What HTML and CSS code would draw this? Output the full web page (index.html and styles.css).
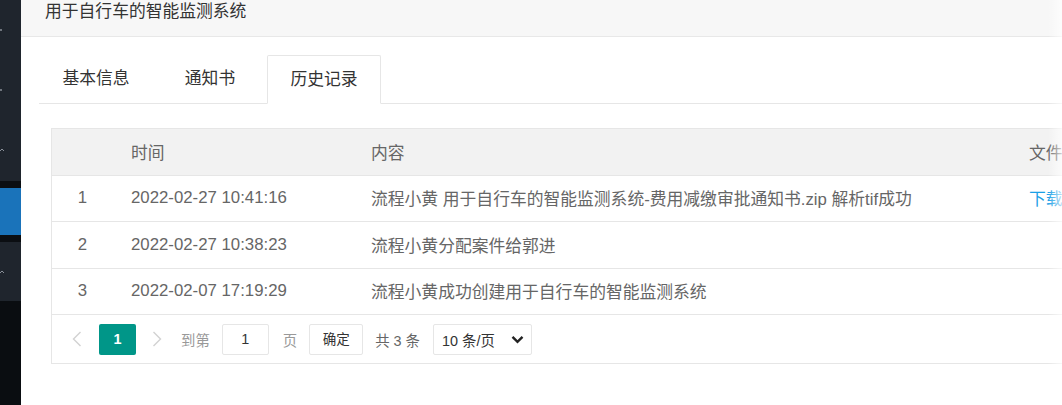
FILE: index.html
```html
<!DOCTYPE html>
<html>
	<head>
		<meta charset="UTF-8">
		<title>历史记录</title>
		<link rel="stylesheet" href="styles.css">
	</head>
	<body>
		<div id="side">
			<div class="seg dark top">
				<i class="mk" style="top:29px"></i>
				<i class="mk" style="top:89px"></i>
				<svg class="up" style="top:148px" width="5" height="5" viewBox="0 0 5 5"><path d="M-1 4 L2 1 L4 3" fill="none" stroke="#8a9099" stroke-width="1"/></svg>
			</div>
			<div class="seg gap"></div>
			<div class="seg blue"></div>
			<div class="seg gap"></div>
			<div class="seg dark mid">
				<svg class="up" style="top:28px" width="5" height="5" viewBox="0 0 5 5"><path d="M-1 4 L2 1 L4 3" fill="none" stroke="#8a9099" stroke-width="1"/></svg>
			</div>
			<div class="seg black"></div>
		</div>
		<div id="main">
			<div class="head">用于自行车的智能监测系统</div>
			<div class="tab">
				<ul class="tab-title">
					<li>基本信息</li>
					<li>通知书</li>
					<li class="this">历史记录</li>
				</ul>
				<div class="tab-content">
					<div class="grid">
						<table>
							<thead>
								<tr>
									<th class="c-no"></th>
									<th class="c-time">时间</th>
									<th class="c-text">内容</th>
									<th class="c-file">文件</th>
								</tr>
							</thead>
							<tbody>
								<tr>
									<td class="c-no">1</td>
									<td>2022-02-27 10:41:16</td>
									<td>流程小黄 用于自行车的智能监测系统-费用减缴审批通知书.zip 解析tif成功</td>
									<td><a class="link">下载</a></td>
								</tr>
								<tr>
									<td class="c-no">2</td>
									<td>2022-02-27 10:38:23</td>
									<td>流程小黄分配案件给郭进</td>
									<td></td>
								</tr>
								<tr>
									<td class="c-no">3</td>
									<td>2022-02-07 17:19:29</td>
									<td>流程小黄成功创建用于自行车的智能监测系统</td>
									<td></td>
								</tr>
							</tbody>
						</table>
						<div class="pager">
							<span class="arrow"><svg width="10" height="16" viewBox="0 0 10 16"><path d="M8.5 1 L1.5 8 L8.5 15" fill="none" stroke="#d2d2d2" stroke-width="1.4"/></svg></span>
							<span class="curr">1</span>
							<span class="arrow next"><svg width="10" height="16" viewBox="0 0 10 16"><path d="M1.5 1 L8.5 8 L1.5 15" fill="none" stroke="#d2d2d2" stroke-width="1.4"/></svg></span>
							<span class="lbl">到第</span>
							<span class="inp">1</span>
							<span class="lbl pg">页</span>
							<span class="btn">确定</span>
							<span class="count">共 3 条</span>
							<span class="sel">10 条/页<svg width="13" height="9" viewBox="0 0 13 9"><path d="M1.5 1.8 L6.5 6.8 L11.5 1.8" fill="none" stroke="#222" stroke-width="2.4"/></svg></span>
						</div>
					</div>
				</div>
			</div>
			<div class="fade"></div>
		</div>
	</body>
</html>
```

FILE: styles.css
```css
*{
	margin: 0;
	padding: 0;
	box-sizing: border-box;
}
body{
	display: flex;
	width: 1062px;
	height: 405px;
	overflow: hidden;
	background: #fff;
	font-family: "Liberation Sans", "Noto Sans CJK SC", sans-serif;
	color: #666;
}
#side{
	position: relative;
	width: 21px;
	flex-shrink: 0;
	display: flex;
	flex-direction: column;
}
#side .seg{
	position: relative;
}
#side .dark{
	background: #1f252d;
}
#side .top{
	height: 181px;
}
#side .gap{
	height: 7px;
	background: #0b0e12;
}
#side .blue{
	height: 47px;
	background: #1a73ba;
}
#side .mid{
	height: 59px;
}
#side .black{
	flex: 1;
	background: #0a0d11;
}
#side .mk{
	position: absolute;
	left: 0;
	width: 2px;
	height: 2px;
	background: #6f757d;
}
#side .up{
	position: absolute;
	left: 0;
}
#main{
	position: relative;
	flex: 1;
	min-width: 0;
	overflow: hidden;
}
.head{
	height: 37px;
	padding-left: 24px;
	background: #f7f7f7;
	border-bottom: 1px solid #e8e8e8;
	font-size: 16.8px;
	line-height: 23px;
	color: #333;
}
.tab{
	margin-top: 18px;
	padding-left: 18px;
}
.tab-title{
	display: flex;
	list-style: none;
	height: 49px;
	width: 1100px;
	border-bottom: 1px solid #e6e6e6;
}
.tab-title li{
	width: 114px;
	height: 49px;
	text-align: center;
	font-size: 16.8px;
	line-height: 48px;
	color: #333;
}
.tab-title li.this{
	border: 1px solid #e6e6e6;
	border-bottom-color: #fff;
	border-radius: 2px 2px 0 0;
	background: #fff;
}
.tab-content{
	padding: 24px 0 0 12px;
}
.grid{
	width: 1100px;
	border: 1px solid #e6e6e6;
}
table{
	width: 100%;
	border-collapse: collapse;
	table-layout: fixed;
	font-size: 16.8px;
}
th, td{
	height: 46px;
	padding: 0 18px;
	text-align: left;
	font-weight: normal;
	white-space: nowrap;
	color: #666;
	border-bottom: 1px solid #e6e6e6;
}
tbody td{
	height: 46.6px;
}
thead tr{
	background: #f2f2f2;
}
.c-no{
	width: 61px;
	text-align: center;
}
.c-time{
	width: 240px;
}
.c-text{
	width: 658px;
}
.link{
	color: #1ba0e6;
}
.pager{
	display: flex;
	align-items: center;
	height: 48px;
	padding-left: 10px;
	font-size: 14.4px;
	color: #666;
}
.pager .arrow{
	display: flex;
	justify-content: center;
	width: 30px;
}
.pager .next{
	margin-left: 6px;
}
.pager .curr{
	width: 37px;
	height: 31px;
	margin-left: 7px;
	line-height: 31px;
	text-align: center;
	background: #009688;
	border-radius: 2px;
	color: #fff;
	font-weight: bold;
}
.pager .lbl{
	margin-left: 9px;
	color: #999;
}
.pager .pg{
	margin-left: 14px;
}
.pager .inp{
	width: 47px;
	height: 31px;
	margin-left: 12px;
	line-height: 29px;
	text-align: center;
	border: 1px solid #e6e6e6;
	border-radius: 2px;
	color: #333;
}
.pager .btn{
	width: 54px;
	height: 31px;
	margin-left: 12px;
	line-height: 29px;
	text-align: center;
	border: 1px solid #e6e6e6;
	border-radius: 2px;
	color: #333;
	font-size: 13.5px;
}
.pager .count{
	margin-left: 12px;
}
.pager .sel{
	display: flex;
	align-items: center;
	justify-content: space-between;
	width: 99px;
	height: 31px;
	margin-left: 13px;
	padding: 0 7px 0 8px;
	border: 1px solid #e6e6e6;
	border-radius: 2px;
	color: #333;
}
.fade{
	position: absolute;
	top: 0;
	right: 0;
	width: 14px;
	height: 100%;
	background: linear-gradient(to right, rgba(255,255,255,0), rgba(255,255,255,0.7));
}
```
